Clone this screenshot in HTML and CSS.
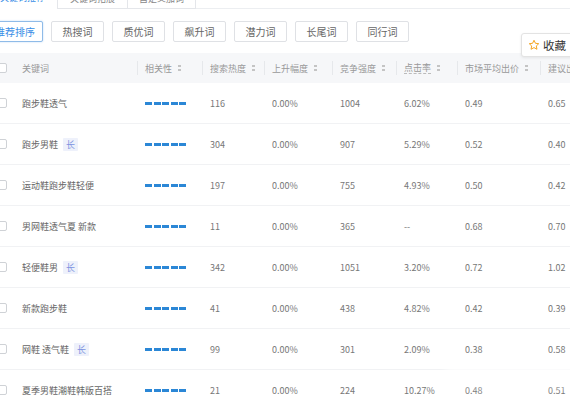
FILE: index.html
```html
<!DOCTYPE html>
<html lang="zh">
<head>
<meta charset="utf-8">
<link rel="stylesheet" href="styles.css">
</head>
<body>
<div class="page">
  <div class="tabs">
    <div class="tab tab-active">关键词推荐</div>
    <div class="tab">关键词拓展</div>
    <div class="tab tab-last">自定义加词</div>
    <div class="tab-fill"></div>
  </div>

  <div class="filters">
    <button class="fbtn fbtn-active">推荐排序</button>
    <button class="fbtn">热搜词</button>
    <button class="fbtn">质优词</button>
    <button class="fbtn">飙升词</button>
    <button class="fbtn">潜力词</button>
    <button class="fbtn">长尾词</button>
    <button class="fbtn">同行词</button>
  </div>

  <div class="fav">
    <svg class="star" viewBox="0 0 24 24" width="12" height="12"><path d="M12 2.5l2.9 6.1 6.6.8-4.9 4.5 1.3 6.6L12 17.2l-5.9 3.3 1.3-6.6-4.9-4.5 6.6-.8z" fill="none" stroke="#f5a623" stroke-width="2" stroke-linejoin="round"/></svg>
    <span>收藏</span>
  </div>

  <div class="table">
    <div class="row head">
      <div class="cell"><span class="cb"></span></div>
      <div class="cell">关键词</div>
      <div class="cell sep">相关性<i class="sort"></i></div>
      <div class="cell sep">搜索热度<i class="sort"></i></div>
      <div class="cell sep">上升幅度<i class="sort"></i></div>
      <div class="cell sep">竞争强度<i class="sort"></i></div>
      <div class="cell sep"><span class="dash">点击率</span><i class="sort"></i></div>
      <div class="cell sep">市场平均出价<i class="sort"></i></div>
      <div class="cell sep">建议出价<i class="sort"></i></div>
    </div>

    <div class="row">
      <div class="cell"><span class="cb"></span></div>
      <div class="cell kw">跑步鞋透气</div>
      <div class="cell"><span class="rel"><b></b><b></b><b></b><b></b><b></b></span></div>
      <div class="cell">116</div><div class="cell">0.00%</div><div class="cell">1004</div><div class="cell">6.02%</div><div class="cell">0.49</div><div class="cell">0.65</div>
    </div>
    <div class="row">
      <div class="cell"><span class="cb"></span></div>
      <div class="cell kw">跑步男鞋<span class="tag">长</span></div>
      <div class="cell"><span class="rel"><b></b><b></b><b></b><b></b><b></b></span></div>
      <div class="cell">304</div><div class="cell">0.00%</div><div class="cell">907</div><div class="cell">5.29%</div><div class="cell">0.52</div><div class="cell">0.40</div>
    </div>
    <div class="row">
      <div class="cell"><span class="cb"></span></div>
      <div class="cell kw">运动鞋跑步鞋轻便</div>
      <div class="cell"><span class="rel"><b></b><b></b><b></b><b></b><b></b></span></div>
      <div class="cell">197</div><div class="cell">0.00%</div><div class="cell">755</div><div class="cell">4.93%</div><div class="cell">0.50</div><div class="cell">0.42</div>
    </div>
    <div class="row">
      <div class="cell"><span class="cb"></span></div>
      <div class="cell kw">男网鞋透气夏 新款</div>
      <div class="cell"><span class="rel"><b></b><b></b><b></b><b></b><b></b></span></div>
      <div class="cell">11</div><div class="cell">0.00%</div><div class="cell">365</div><div class="cell">--</div><div class="cell">0.68</div><div class="cell">0.70</div>
    </div>
    <div class="row">
      <div class="cell"><span class="cb"></span></div>
      <div class="cell kw">轻便鞋男<span class="tag">长</span></div>
      <div class="cell"><span class="rel"><b></b><b></b><b></b><b></b><b></b></span></div>
      <div class="cell">342</div><div class="cell">0.00%</div><div class="cell">1051</div><div class="cell">3.20%</div><div class="cell">0.72</div><div class="cell">1.02</div>
    </div>
    <div class="row">
      <div class="cell"><span class="cb"></span></div>
      <div class="cell kw">新款跑步鞋</div>
      <div class="cell"><span class="rel"><b></b><b></b><b></b><b></b><b></b></span></div>
      <div class="cell">41</div><div class="cell">0.00%</div><div class="cell">438</div><div class="cell">4.82%</div><div class="cell">0.42</div><div class="cell">0.39</div>
    </div>
    <div class="row">
      <div class="cell"><span class="cb"></span></div>
      <div class="cell kw">网鞋 透气鞋<span class="tag">长</span></div>
      <div class="cell"><span class="rel"><b></b><b></b><b></b><b></b><b></b></span></div>
      <div class="cell">99</div><div class="cell">0.00%</div><div class="cell">301</div><div class="cell">2.09%</div><div class="cell">0.38</div><div class="cell">0.58</div>
    </div>
    <div class="row">
      <div class="cell"><span class="cb"></span></div>
      <div class="cell kw">夏季男鞋潮鞋韩版百搭</div>
      <div class="cell"><span class="rel"><b></b><b></b><b></b><b></b><b></b></span></div>
      <div class="cell">21</div><div class="cell">0.00%</div><div class="cell">224</div><div class="cell">10.27%</div><div class="cell">0.48</div><div class="cell">0.51</div>
    </div>
  </div>
  <div class="glare"></div>
</div>
</body>
</html>
```

FILE: styles.css
```css
html, body {
  margin: 0;
  padding: 0;
  background: #fff;
  overflow: hidden;
}
body {
  width: 570px;
  height: 401px;
  font-family: "Noto Sans CJK SC", "Noto Sans", sans-serif;
  color: #666;
}
.page {
  position: relative;
  width: 570px;
  height: 401px;
  overflow: hidden;
}

/* top tabs */
.tabs {
  display: flex;
  height: 20px;
  margin-top: -11px;
  margin-left: -12px;
}
.tab {
  box-sizing: border-box;
  width: 70px;
  height: 20px;
  font-size: 9px;
  line-height: 18px;
  text-align: center;
  color: #888;
  border: 1px solid #e4e6ea;
  border-left: none;
  background: #fff;
}
.tab-active {
  color: #3a8ee6;
  border: none;
  border-right: 1px solid #e4e6ea;
}
.tab-last { width: 68px; }
.tab-fill {
  flex: 1;
  border-bottom: 1px solid #eceef1;
}

/* filter buttons */
.filters {
  display: flex;
  gap: 8px;
  margin-top: 12px;
  margin-left: -13px;
}
.fbtn {
  box-sizing: border-box;
  width: 53px;
  height: 21px;
  padding: 0;
  border: 1px solid #dfe1e5;
  border-radius: 2px;
  background: #fff;
  font-family: inherit;
  font-size: 10px;
  color: #666;
  line-height: 19px;
}
.fbtn-active {
  width: 56px;
  border-color: #8fbbe8;
  color: #3a8ee6;
  box-shadow: 0 0 2px rgba(58, 142, 230, 0.35);
}

/* favourite button */
.fav {
  position: absolute;
  left: 521px;
  top: 33px;
  box-sizing: border-box;
  width: 62px;
  height: 24px;
  display: flex;
  align-items: center;
  gap: 3px;
  padding-left: 6px;
  background: #fff;
  border: 1px solid #e3e3e3;
  border-radius: 3px;
  box-shadow: 0 1px 3px rgba(0, 0, 0, 0.08);
  font-size: 11.5px;
  color: #333;
}
.star { display: block; }

/* table */
.table {
  margin-top: 11px;
  margin-left: -8px;
  width: 628px;
}
.row {
  display: grid;
  grid-template-columns: 22px 123px 65px 62px 68px 64px 61px 83px 80px;
  height: 41px;
  border-bottom: 1px solid #f1f2f4;
  box-sizing: border-box;
  font-size: 9px;
  color: #777;
}
.row.head {
  height: 30px;
  background: #f6f7f9;
  border-bottom: none;
  color: #999;
}
.cell {
  display: flex;
  align-items: center;
  padding-left: 8px;
  position: relative;
  white-space: nowrap;
}
.row > .cell:first-child { padding-left: 5px; }
.cell.sep::before {
  content: "";
  position: absolute;
  left: 0;
  top: 8px;
  bottom: 8px;
  width: 1px;
  background: #e6e8eb;
}
.kw { color: #666; }
.cb {
  box-sizing: border-box;
  width: 10px;
  height: 10px;
  border: 1px solid #cfd2d6;
  border-radius: 2px;
  background: #fff;
}
.sort {
  display: inline-block;
  width: 3px;
  height: 6px;
  margin-left: 6px;
  background:
    linear-gradient(#c4c4c4, #c4c4c4) top/3px 2px no-repeat,
    linear-gradient(#c4c4c4, #c4c4c4) bottom/3px 2px no-repeat;
}
.dash { border-bottom: 1px dashed #bbb; line-height: 11px; }
.tag {
  display: inline-block;
  margin-left: 5px;
  padding: 0 3px;
  height: 13px;
  line-height: 13px;
  background: #eef1fb;
  color: #7d92e0;
  font-size: 9px;
  border-radius: 1px;
}
.rel {
  display: flex;
  gap: 1.5px;
}
.rel b {
  display: block;
  width: 7px;
  height: 3px;
  background: #2b87d6;
}

.glare {
  position: absolute;
  left: 445px;
  top: 364px;
  width: 140px;
  height: 22px;
  background: rgba(255, 255, 255, 0.75);
  filter: blur(4px);
}
```
